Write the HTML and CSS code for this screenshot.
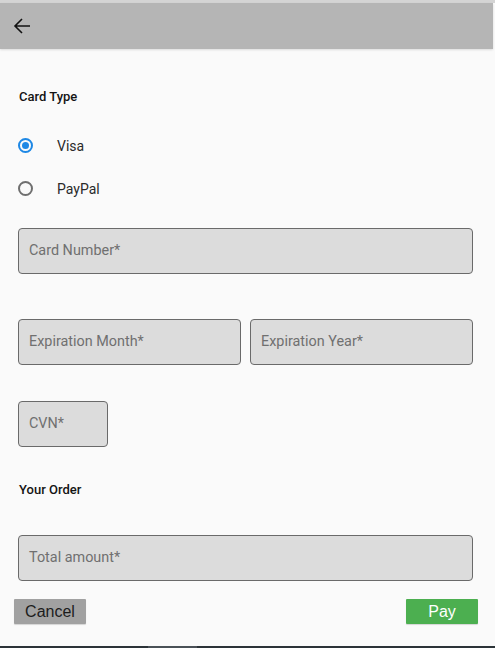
FILE: index.html
```html
<!DOCTYPE html>
<html>
<head>
<meta charset="utf-8">
<link rel="stylesheet" href="styles.css">
</head>
<body>
<div class="page">
  <div class="top-strip"></div>
  <header class="appbar">
    <svg class="back" width="18" height="16" viewBox="0 0 18 16">
      <path d="M2 8H17M9 1L2 8L9 15" fill="none" stroke="#111" stroke-width="1.6"/>
    </svg>
  </header>
  <main class="content">
    <div class="section-title first">Card Type</div>
    <div class="radios">
      <label class="radio-row"><span class="radio checked"></span><span class="radio-label">Visa</span></label>
      <label class="radio-row"><span class="radio"></span><span class="radio-label">PayPal</span></label>
    </div>
    <div class="field full card-number"><span class="ph">Card Number*</span></div>
    <div class="field-row">
      <div class="field half"><span class="ph">Expiration Month*</span></div>
      <div class="field half"><span class="ph">Expiration Year*</span></div>
    </div>
    <div class="field cvn"><span class="ph">CVN*</span></div>
    <div class="section-title order">Your Order</div>
    <div class="field full total"><span class="ph">Total amount*</span></div>
    <div class="actions">
      <button class="btn cancel">Cancel</button>
      <button class="btn pay">Pay</button>
    </div>
  </main>
  <div class="bottom-strip"><span class="seg"></span></div>
</div>
</body>
</html>
```
FILE: styles.css
```css
html, body {
  margin: 0;
  padding: 0;
  background: #fafafa;
}
.page {
  width: 495px;
  height: 648px;
  display: flex;
  flex-direction: column;
  font-family: Roboto, "Liberation Sans", sans-serif;
  overflow: hidden;
}
.top-strip {
  height: 3px;
  background: #d4d4d4;
}
.appbar {
  height: 46px;
  margin-right: 2px;
  background: #b5b5b5;
  display: flex;
  align-items: center;
  padding-left: 13px;
  box-shadow: 0 1px 2px rgba(0,0,0,0.12);
}
.back {
  display: block;
  margin-top: -1px;
}
.content {
  flex: 1;
  display: flex;
  flex-direction: column;
  padding: 0 22px 0 18px;
}
.section-title {
  font-size: 13px;
  line-height: 16px;
  font-weight: 500;
  color: #141414;
  padding-left: 1px;
}
.section-title.first {
  margin-top: 40px;
}
.radios {
  margin-top: 19px;
  display: flex;
  flex-direction: column;
}
.radio-row {
  height: 43px;
  display: flex;
  align-items: center;
}
.radio {
  box-sizing: border-box;
  width: 15px;
  height: 15px;
  border-radius: 50%;
  border: 2px solid #6f6f6f;
  display: flex;
  align-items: center;
  justify-content: center;
}
.radio.checked {
  border-color: #1e88e5;
}
.radio.checked::after {
  content: "";
  width: 7px;
  height: 7px;
  border-radius: 50%;
  background: #1e88e5;
}
.radio-label {
  margin-left: 24px;
  font-size: 14px;
  color: #2a2a2a;
}
.field {
  box-sizing: border-box;
  height: 46px;
  border: 1px solid #6a6a6a;
  border-radius: 4px;
  background: #dcdcdc;
  display: flex;
  align-items: center;
  padding-left: 10px;
}
.ph {
  font-size: 14.4px;
  color: #707070;
  margin-top: -1px;
}
.card-number {
  margin-top: 18px;
}
.field-row {
  margin-top: 45px;
  display: flex;
  gap: 9px;
}
.field.half {
  flex: 1;
}
.cvn {
  margin-top: 36px;
  width: 90px;
}
.section-title.order {
  margin-top: 35px;
}
.total {
  margin-top: 37px;
}
.actions {
  margin-top: 18px;
  margin-left: -4px;
  margin-right: -5px;
  display: flex;
  justify-content: space-between;
}
.btn {
  width: 72px;
  height: 25px;
  border: none;
  border-radius: 1px;
  font-family: "Liberation Sans", Arial, sans-serif;
  font-size: 16px;
  padding: 0;
  box-shadow: 0 1px 1px rgba(0,0,0,0.15);
}
.cancel {
  background: #a1a1a1;
  color: #1c1c1c;
}
.pay {
  background: #4caf50;
  color: #ffffff;
}
.bottom-strip {
  height: 2px;
  background: #2c3338;
  position: relative;
}
.seg {
  position: absolute;
  left: 148px;
  width: 49px;
  top: 0;
  height: 2px;
  background: #4a5157;
}
```
